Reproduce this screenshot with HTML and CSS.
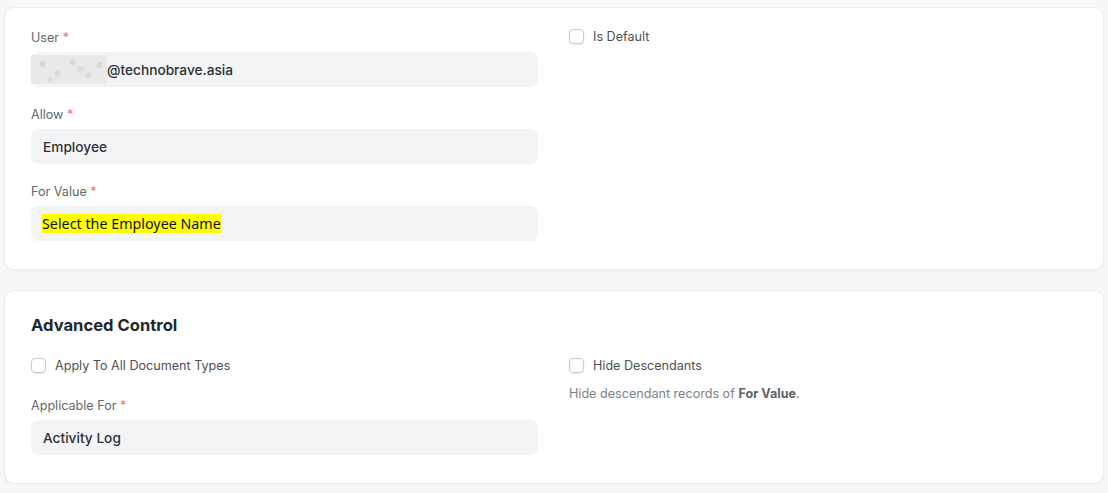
FILE: index.html
```html
<!DOCTYPE html>
<html lang="en">
<head>
  <meta charset="UTF-8">
  <title>User Permission</title>
  <meta name="viewport" content="width=device-width, initial-scale=1.0">
  <link rel="stylesheet" href="styles.css">
</head>
<body>
  <div class="form-section">
    <div class="section-body">
      <div class="form-column">
        <div class="field top">
          <label class="control-label">User <span class="reqd">*</span></label>
          <div class="control-input"><span class="blurred"></span>@technobrave.asia</div>
        </div>
        <div class="field">
          <label class="control-label">Allow <span class="reqd">*</span></label>
          <div class="control-input">Employee</div>
        </div>
        <div class="field last">
          <label class="control-label">For Value <span class="reqd">*</span></label>
          <div class="control-input"><span class="highlight">Select the Employee Name</span></div>
        </div>
      </div>
      <div class="form-column">
        <div class="checkbox">
          <span class="box"></span>
          <span class="check-label">Is Default</span>
        </div>
      </div>
    </div>
  </div>

  <div class="form-section">
    <h4 class="section-head">Advanced Control</h4>
    <div class="section-body">
      <div class="form-column">
        <div class="checkbox spaced">
          <span class="box"></span>
          <span class="check-label">Apply To All Document Types</span>
        </div>
        <div class="field last">
          <label class="control-label">Applicable For <span class="reqd">*</span></label>
          <div class="control-input">Activity Log</div>
        </div>
      </div>
      <div class="form-column">
        <div class="checkbox">
          <span class="box"></span>
          <span class="check-label">Hide Descendants</span>
        </div>
        <p class="help-box">Hide descendant records of <b>For Value</b>.</p>
      </div>
    </div>
  </div>
</body>
</html>
```

FILE: styles.css
```css
body {
  font-family: Inter, "Noto Sans", sans-serif;
  background: #f7f8f8;
  color: #1f272e;
  margin: 0;
  padding: 7px 4px 0;
  display: flex;
  flex-direction: column;
  gap: 20px;
}
.form-section {
  background: #fff;
  border: 1px solid #ebeded;
  border-radius: 10px;
  box-shadow: 0 1px 2px rgba(0, 0, 0, 0.05);
  padding: 19px 26px 28px;
}
.section-body {
  display: grid;
  grid-template-columns: 507px 1fr;
  gap: 31px;
}
.section-head {
  margin: 0 0 16px;
  font-size: 16.6px;
  line-height: 30px;
  font-weight: 700;
  color: #1f272e;
}
.field {
  margin-bottom: 19px;
}
.field.top {
  padding-top: 2px;
}
.field.last {
  margin-bottom: 0;
}
.control-label {
  display: block;
  font-size: 12.6px;
  line-height: 18px;
  color: #62686c;
  margin-bottom: 5px;
}
.reqd {
  color: #f27070;
}
.control-input {
  height: 35px;
  box-sizing: border-box;
  background: #f3f4f5;
  border-radius: 8px;
  padding: 0 12px;
  display: flex;
  align-items: center;
  font-size: 13.7px;
  font-weight: 500;
  color: #2b3136;
}
.blurred {
  width: 76px;
  height: 29px;
  margin-left: -12px;
  background:
    radial-gradient(circle at 15% 30%, #d6d6d6 0 2px, transparent 4px),
    radial-gradient(circle at 35% 65%, #d9d9d9 0 2px, transparent 4px),
    radial-gradient(circle at 55% 25%, #d5d5d5 0 2px, transparent 4px),
    radial-gradient(circle at 75% 70%, #dadada 0 2px, transparent 4px),
    radial-gradient(circle at 90% 35%, #d8d8d8 0 2px, transparent 4px),
    radial-gradient(circle at 25% 85%, #dcdcdc 0 2px, transparent 4px),
    radial-gradient(circle at 65% 50%, #dedede 0 3px, transparent 5px),
    #e9e9e9;
}
.highlight {
  background: #ffff00;
  color: #111;
  font-family: "Noto Sans", sans-serif;
  font-weight: 400;
  font-size: 14.3px;
  line-height: 19px;
  margin-left: -1px;
}
.checkbox {
  display: flex;
  align-items: center;
  gap: 9px;
  height: 18px;
  font-size: 12.6px;
  color: #4c5256;
}
.checkbox.spaced {
  margin-bottom: 23px;
}
.box {
  width: 13px;
  height: 13px;
  border: 1px solid #c6cace;
  border-radius: 4px;
  box-shadow: 0 1px 2px rgba(0, 0, 0, 0.08);
}
.help-box {
  margin: 11px 0 0;
  font-size: 12.6px;
  line-height: 18px;
  color: #7c8287;
}
.help-box b {
  color: #5e6468;
}
```
